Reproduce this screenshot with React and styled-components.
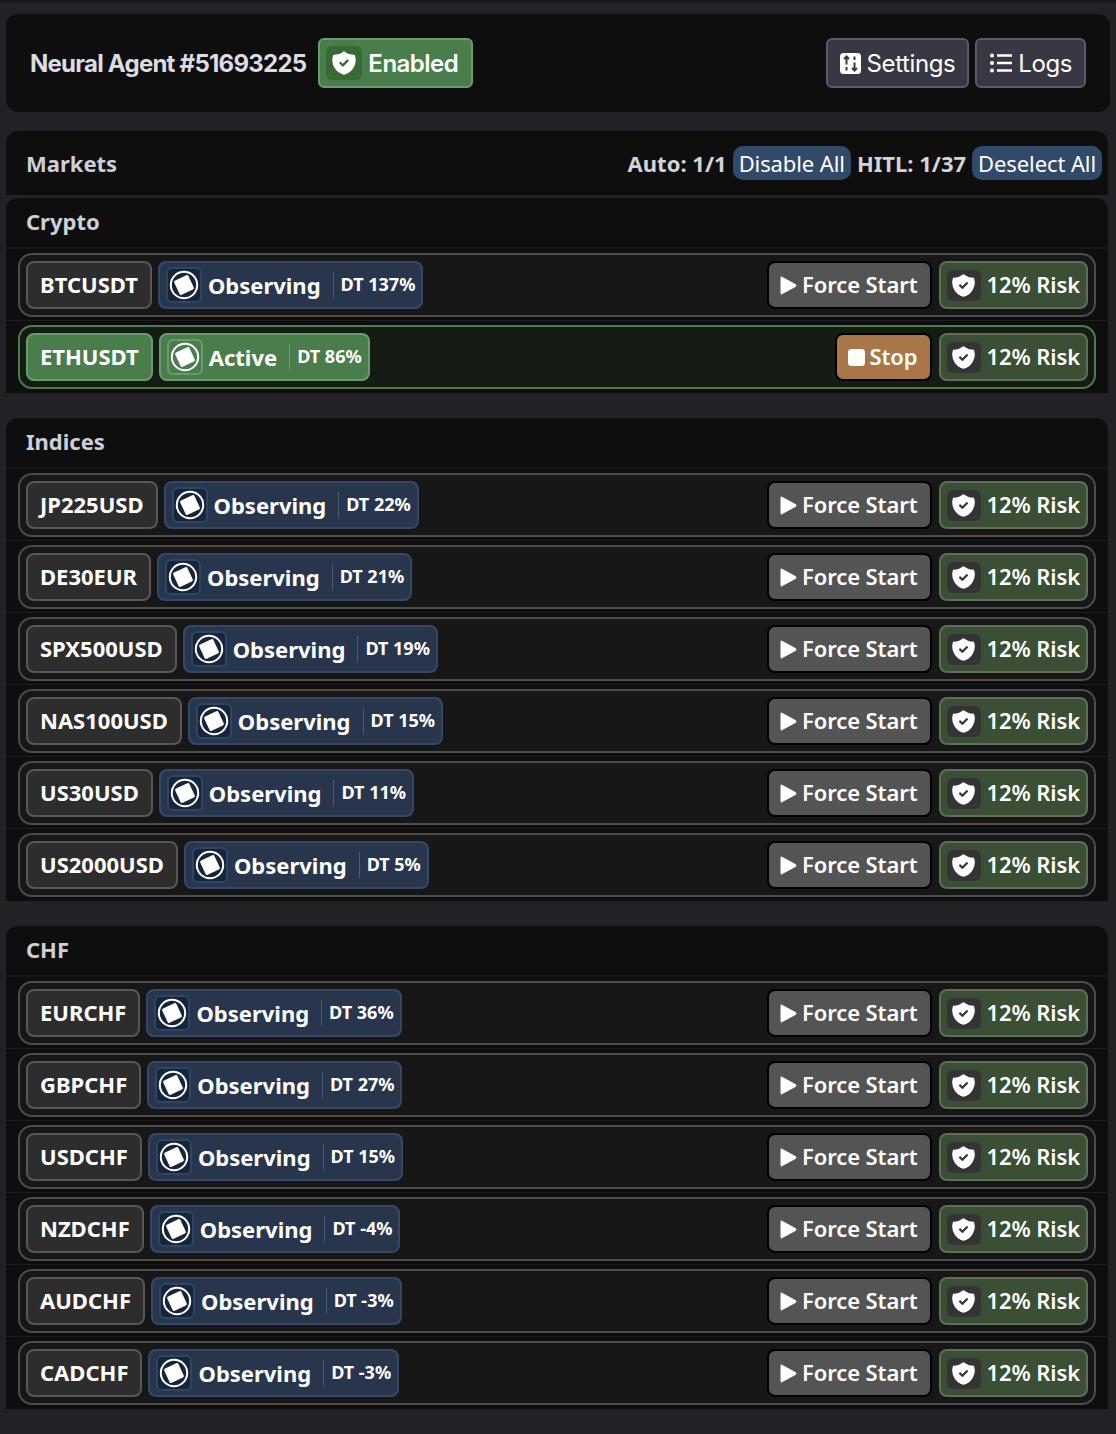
import React from "react";
import styled, { createGlobalStyle } from "styled-components";
import { TbShieldCheckFilled } from "react-icons/tb";

const GlobalStyle = createGlobalStyle`
  html, body {
    margin: 0;
    background: #212126;
  }
  body {
    font-family: "Noto Sans", "Open Sans", sans-serif;
    color: #fff;
  }
  * {
    box-sizing: border-box;
  }
`;

const Page = styled.div`
  display: flex;
  flex-direction: column;
  padding: 12px 6px 25px;
  border-top: 2px solid #17171b;
`;

const AgentBar = styled.div`
  display: flex;
  align-items: center;
  justify-content: space-between;
  height: 98px;
  padding: 0 24px;
  background: #0e0e0f;
  border-radius: 12px;
`;

const AgentLeft = styled.div`
  display: flex;
  align-items: center;
  gap: 12px;
`;

const AgentName = styled.div`
  font-family: Inter, sans-serif;
  font-size: 24px;
  font-weight: 700;
  letter-spacing: -0.75px;
  color: #dcdce2;
`;

const EnabledPill = styled.div`
  display: flex;
  align-items: center;
  gap: 6px;
  height: 50px;
  padding: 0 13px 0 6px;
  border: 2px solid #6a9a6e;
  border-radius: 6px;
  background: #4a7d4c;
  font-family: Inter, sans-serif;
  font-size: 24px;
  font-weight: 600;
  letter-spacing: -0.5px;
`;

const EnabledIcon = styled.span`
  display: flex;
  align-items: center;
  justify-content: center;
  width: 36px;
  height: 34px;
  border-radius: 6px;
  background: #376a35;
  font-size: 28px;
`;

const ToolGroup = styled.div`
  display: flex;
  gap: 6px;
`;

const ToolButton = styled.div`
  display: flex;
  align-items: center;
  gap: 5px;
  height: 50px;
  padding: 0 12px;
  border: 2px solid #5b5b6b;
  border-radius: 6px;
  background: #383845;
  font-family: Inter, sans-serif;
  font-size: 24px;
  letter-spacing: -0.4px;
`;

const MarketsBar = styled.div`
  display: flex;
  align-items: center;
  justify-content: space-between;
  height: 64px;
  width: 1102px;
  margin-top: 19px;
  padding: 0 6px 0 20px;
  background: #0e0e0f;
  border-radius: 12px 12px 0 0;
`;

const MarketsTitle = styled.div`
  font-size: 22px;
  font-weight: 700;
  color: #cfcfd6;
`;

const MarketsActions = styled.div`
  display: flex;
  align-items: center;
  gap: 6px;
`;

const Counter = styled.span`
  font-size: 22px;
  font-weight: 700;
  color: #d4d4d4;
`;

const PillButton = styled.span`
  padding: 0 6px;
  height: 34px;
  line-height: 35px;
  border-radius: 10px;
  background: #324a69;
  font-size: 22px;
  letter-spacing: -0.1px;
  white-space: nowrap;
`;

const Section = styled.section`
  display: flex;
  flex-direction: column;
  width: 1102px;
  margin-top: ${(props) => props.$gap}px;
  padding-bottom: 1px;
  background: #0e0e0f;
  border-radius: 12px 12px 0 0;
`;

const SectionTitle = styled.div`
  height: 51px;
  padding: 8px 20px 0;
  font-size: 22px;
  font-weight: 700;
  color: #cfcfd6;
  border-bottom: 2px solid #161618;
`;

const Wrap = styled.div`
  padding: 4px 12px 3px;
  border-bottom: 1px solid #1d1d20;

  &:last-child {
    border-bottom: 0;
  }
`;

const Row = styled.div`
  display: flex;
  align-items: center;
  gap: 6px;
  height: 64px;
  padding: 0 6px;
  border: 2px solid ${(props) => (props.$active ? "#4a7d4c" : "#4c4c4c")};
  border-radius: 14px;
  background: ${(props) => (props.$active ? "#141c14" : "#171717")};
`;

const Symbol = styled.div`
  display: flex;
  align-items: center;
  height: 48px;
  padding: 0 12px 2px;
  border: 2px solid ${(props) => (props.$active ? "#6a9a6e" : "#595656")};
  border-radius: 8px;
  background: ${(props) => (props.$active ? "#4a7d4c" : "#2d2d2d")};
  font-size: 22px;
  font-weight: 700;
`;

const Status = styled.div`
  display: flex;
  align-items: center;
  height: 48px;
  padding: 0 6px;
  border: 2px solid ${(props) => (props.$active ? "#6a9a6e" : "#34496a")};
  border-radius: 8px;
  background: ${(props) => (props.$active ? "#4a7d4c" : "#27364d")};
`;

const StatusIcon = styled.span`
  display: flex;
  align-items: center;
  justify-content: center;
  width: 36px;
  height: 36px;
  margin-right: 6px;
  border: 2px solid ${(props) => (props.$active ? "#6a9a6e" : "#2e4566")};
  border-radius: 6px;
  background: ${(props) => (props.$active ? "#4a7d4c" : "#17253a")};
`;

const StatusLabel = styled.span`
  font-size: 22px;
  font-weight: 700;
`;

const DeltaText = styled.span`
  margin-left: 12px;
  padding: 0 0 2px 7px;
  border-left: 1px solid ${(props) => (props.$active ? "#6a9a6e" : "#4d5d74")};
  font-size: 18px;
  line-height: 24px;
  font-weight: 700;
`;

const Spacer = styled.div`
  flex: 1;
`;

const ForceButton = styled.div`
  display: flex;
  align-items: center;
  gap: 5px;
  height: 48px;
  padding: 0 12px 0 11px;
  border: 2px solid #000;
  border-radius: 8px;
  background: ${(props) => (props.$stop ? "#a87648" : "#545454")};
  font-size: 22px;
  font-weight: 600;
  letter-spacing: -0.1px;
`;

const Risk = styled.div`
  display: flex;
  align-items: center;
  gap: 6px;
  height: 48px;
  margin-left: 1px;
  padding: 0 6px;
  border: 2px solid #5c7058;
  border-radius: 8px;
  background: #3a4f33;
  font-size: 22px;
  font-weight: 600;
  letter-spacing: -0.1px;
`;

const ButtonLabel = styled.span`
  margin-top: -2px;
`;

const RiskIcon = styled.span`
  display: flex;
  align-items: center;
  justify-content: center;
  width: 34px;
  height: 31px;
  border-radius: 6px;
  background: #343434;
  font-size: 27px;
`;

const StatusGlyph = () => (
  <svg width="30" height="30" viewBox="0 0 30 30">
    <circle cx="15" cy="15" r="13.2" fill="none" stroke="#fff" strokeWidth="2" />
    <rect
      x="7.2"
      y="7.2"
      width="15.6"
      height="15.6"
      rx="1.6"
      fill="#fff"
      transform="rotate(-25 15 15)"
    />
  </svg>
);

const PlayGlyph = () => (
  <svg width="17" height="19" viewBox="0 0 17 19">
    <path
      d="M0.5 2 Q0.5 0 2.4 0.9 L15.8 8.3 Q17 9.5 15.8 10.7 L2.4 18.1 Q0.5 19 0.5 17 Z"
      fill="#fff"
    />
  </svg>
);

const StopGlyph = () => (
  <svg width="17" height="17" viewBox="0 0 17 17">
    <rect width="17" height="17" rx="3.5" fill="#fff" />
  </svg>
);

const TuneGlyph = () => (
  <svg width="22" height="21" viewBox="0 0 22 21">
    <rect width="21" height="21" rx="3.5" fill="#fff" />
    <path d="M6.5 3.5v8M4 6 6.5 3.5 9 6M6.5 14v3.5" stroke="#383845" strokeWidth="2" fill="none" />
    <path d="M14.5 17.5v-8M12 15 14.5 17.5 17 15M14.5 7V3.5" stroke="#383845" strokeWidth="2" fill="none" />
  </svg>
);

const ListGlyph = () => (
  <svg width="24" height="22" viewBox="0 0 24 22">
    <circle cx="3" cy="3.5" r="2" fill="#fff" />
    <circle cx="3" cy="11" r="2" fill="#fff" />
    <circle cx="3" cy="18.5" r="2" fill="#fff" />
    <path d="M8 3.5h15M8 11h15M8 18.5h15" stroke="#fff" strokeWidth="2.4" />
  </svg>
);

const groups = [
  {
    name: "Crypto",
    gap: 3,
    rows: [
      ["BTCUSDT", "DT 137%"],
      ["ETHUSDT", "DT 86%", true],
    ],
  },
  {
    name: "Indices",
    gap: 25,
    rows: [
      ["JP225USD", "DT 22%"],
      ["DE30EUR", "DT 21%"],
      ["SPX500USD", "DT 19%"],
      ["NAS100USD", "DT 15%"],
      ["US30USD", "DT 11%"],
      ["US2000USD", "DT 5%"],
    ],
  },
  {
    name: "CHF",
    gap: 25,
    rows: [
      ["EURCHF", "DT 36%"],
      ["GBPCHF", "DT 27%"],
      ["USDCHF", "DT 15%"],
      ["NZDCHF", "DT -4%"],
      ["AUDCHF", "DT -3%"],
      ["CADCHF", "DT -3%"],
    ],
  },
];

const MarketRow = ({ symbol, delta, active }) => (
  <Wrap>
    <Row $active={active}>
      <Symbol $active={active}>{symbol}</Symbol>
      <Status $active={active}>
        <StatusIcon $active={active}>
          <StatusGlyph />
        </StatusIcon>
        <StatusLabel>{active ? "Active" : "Observing"}</StatusLabel>
        <DeltaText $active={active}>{delta}</DeltaText>
      </Status>
      <Spacer />
      {active ? (
        <ForceButton $stop>
          <StopGlyph />
          <ButtonLabel>Stop</ButtonLabel>
        </ForceButton>
      ) : (
        <ForceButton>
          <PlayGlyph />
          <ButtonLabel>Force Start</ButtonLabel>
        </ForceButton>
      )}
      <Risk>
        <RiskIcon>
          <TbShieldCheckFilled />
        </RiskIcon>
        <ButtonLabel>12% Risk</ButtonLabel>
      </Risk>
    </Row>
  </Wrap>
);

const App = () => {
  return (
    <Page>
      <GlobalStyle />
      <AgentBar>
        <AgentLeft>
          <AgentName>Neural Agent #51693225</AgentName>
          <EnabledPill>
            <EnabledIcon>
              <TbShieldCheckFilled />
            </EnabledIcon>
            Enabled
          </EnabledPill>
        </AgentLeft>
        <ToolGroup>
          <ToolButton>
            <TuneGlyph />
            Settings
          </ToolButton>
          <ToolButton>
            <ListGlyph />
            Logs
          </ToolButton>
        </ToolGroup>
      </AgentBar>
      <MarketsBar>
        <MarketsTitle>Markets</MarketsTitle>
        <MarketsActions>
          <Counter>Auto: 1/1</Counter>
          <PillButton>Disable All</PillButton>
          <Counter>HITL: 1/37</Counter>
          <PillButton>Deselect All</PillButton>
        </MarketsActions>
      </MarketsBar>
      {groups.map((group) => (
        <Section key={group.name} $gap={group.gap}>
          <SectionTitle>{group.name}</SectionTitle>
          {group.rows.map(([symbol, delta, active]) => (
            <MarketRow key={symbol} symbol={symbol} delta={delta} active={active} />
          ))}
        </Section>
      ))}
    </Page>
  );
};

export default App;
